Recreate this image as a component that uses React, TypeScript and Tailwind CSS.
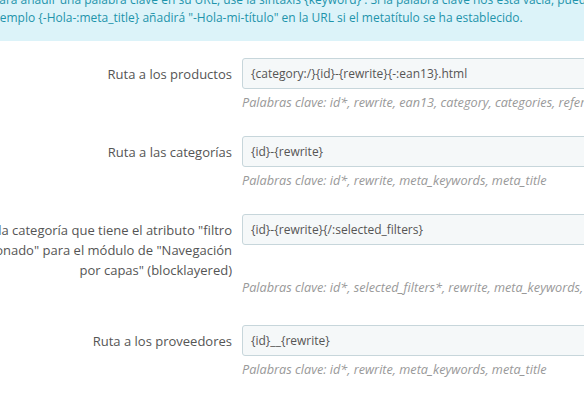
import React from "react";

const rows = [
  {
    id: 1,
    label: ["Ruta a los productos"],
    value: "{category:/}{id}-{rewrite}{-:ean13}.html",
    help: "Palabras clave: id*, rewrite, ean13, category, categories, reference, meta_keywords, meta_title",
  },
  {
    id: 2,
    label: ["Ruta a las categorías"],
    value: "{id}-{rewrite}",
    help: "Palabras clave: id*, rewrite, meta_keywords, meta_title",
  },
  {
    id: 3,
    label: [
      'Ruta a la categoría que tiene el atributo "filtro',
      'seleccionado" para el módulo de "Navegación',
      'por capas" (blocklayered)',
    ],
    value: "{id}-{rewrite}{/:selected_filters}",
    help: "Palabras clave: id*, selected_filters*, rewrite, meta_keywords, meta_title",
  },
  {
    id: 4,
    label: ["Ruta a los proveedores"],
    value: "{id}__{rewrite}",
    help: "Palabras clave: id*, rewrite, meta_keywords, meta_title",
  },
];

const App = (): JSX.Element => {
  return (
    <div className="w-[584px] h-[395px] overflow-hidden bg-white font-['Open_Sans',sans-serif]">
      {/* info alert, cut off at the top and left */}
      <div className="-mt-[9px] -ml-[8px] w-[720px] bg-[#dcf3f9] pb-[14px] text-[12px] leading-[18px] text-[#1e94ab] whitespace-nowrap">
        <div>
          Para añadir una palabra clave en su URL, use la sintaxis {"{keyword}"} . Si la palabra clave nos está vacía, puede usar
        </div>
        <div className="-ml-[2px]">
          Ejemplo {"{-Hola-:meta_title}"} añadirá "-Hola-mi-título" en la URL si el metatítulo se ha establecido.
        </div>
      </div>

      <div className="flex flex-col pt-[17px]">
        {rows.map((row) => (
          <div
            key={row.id}
            className={`grid grid-cols-[232px_420px] gap-x-[10px] ${row.label.length > 1 ? "mb-[29px]" : "mb-[25px]"}`}
          >
            <div
              className={`text-right text-[13px] leading-[20px] text-[#555] whitespace-nowrap pt-[6px] flex flex-col items-end ${
                row.label.length > 1 ? "-mb-[6px]" : ""
              }`}
            >
              {row.label.map((l) => (
                <span key={l}>{l}</span>
              ))}
            </div>
            <div className="h-[31px] flex items-center px-[8px] bg-[#f5f8f9] border border-[#c7d6db] rounded-[3px] text-[12px] text-[#555] whitespace-nowrap">
              {row.value}
            </div>
            <div />
            <div className="mt-[4px] text-[12.7px] leading-[18px] italic text-[#999] whitespace-nowrap">
              {row.help}
            </div>
          </div>
        ))}
      </div>
    </div>
  );
};

export default App;
